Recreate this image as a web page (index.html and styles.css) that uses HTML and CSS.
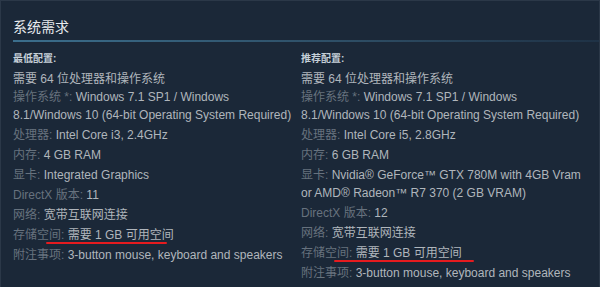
FILE: index.html
```html
<!DOCTYPE html>
<html lang="zh-CN">
<head>
<meta charset="utf-8">
<title>系统需求</title>
<link rel="stylesheet" href="styles.css">
</head>
<body>
<div class="panel">
  <h2 class="title">系统需求</h2>
  <div class="sysreq">
    <div class="col">
      <div class="head">最低配置:</div>
      <div class="req">需要 64 位处理器和操作系统</div>
      <ul class="list">
        <li><span class="lab">操作系统 *:</span> Windows 7.1 SP1 / Windows 8.1/Windows 10 (64-bit Operating System Required)</li>
        <li><span class="lab">处理器:</span> Intel Core i3, 2.4GHz</li>
        <li><span class="lab">内存:</span> 4 GB RAM</li>
        <li><span class="lab">显卡:</span> Integrated Graphics</li>
        <li><span class="lab">DirectX 版本:</span> 11</li>
        <li><span class="lab">网络:</span> 宽带互联网连接</li>
        <li class="mark"><span class="lab">存储空间:</span> 需要 1 GB 可用空间<span class="redline redline-left"></span></li>
        <li><span class="lab">附注事项:</span> 3-button mouse, keyboard and speakers</li>
      </ul>
    </div>
    <div class="col">
      <div class="head">推荐配置:</div>
      <div class="req">需要 64 位处理器和操作系统</div>
      <ul class="list">
        <li><span class="lab">操作系统 *:</span> Windows 7.1 SP1 / Windows 8.1/Windows 10 (64-bit Operating System Required)</li>
        <li><span class="lab">处理器:</span> Intel Core i5, 2.8GHz</li>
        <li><span class="lab">内存:</span> 6 GB RAM</li>
        <li><span class="lab">显卡:</span> Nvidia® GeForce™ GTX 780M with 4GB Vram or AMD® Radeon™ R7 370 (2 GB VRAM)</li>
        <li><span class="lab">DirectX 版本:</span> 12</li>
        <li><span class="lab">网络:</span> 宽带互联网连接</li>
        <li class="mark"><span class="lab">存储空间:</span> 需要 1 GB 可用空间<span class="redline redline-right"></span></li>
        <li><span class="lab">附注事项:</span> 3-button mouse, keyboard and speakers</li>
      </ul>
    </div>
  </div>
</div>
</body>
</html>
```

FILE: styles.css
```css
html, body {
  margin: 0;
  padding: 0;
  background: #1b2838;
}
body {
  width: 600px;
  height: 287px;
  overflow: hidden;
  font-family: "Liberation Sans", Arial, "Noto Sans CJK SC", sans-serif;
  color: #b0b6bc;
}
.panel {
  box-sizing: border-box;
  width: 600px;
  height: 287px;
  border: 1px solid #2b3848;
  border-bottom: none;
  padding: 17px 0 0 12px;
}
.title {
  margin: 0;
  font-size: 14px;
  line-height: 18px;
  font-weight: normal;
  color: #e8ebee;
}
.title::after {
  content: "";
  display: block;
  height: 2px;
  margin-top: 4px;
  background: linear-gradient(to right, #3b6e8c 0%, #2d4c63 60%, #1f3246 100%);
}
.sysreq {
  display: flex;
  gap: 8px;
  margin-top: 10px;
}
.col {
  width: 280px;
}
.head {
  font-size: 10px;
  line-height: 14px;
  font-weight: bold;
  color: #c6d0d8;
  margin-bottom: 4px;
}
.req {
  font-size: 12px;
  line-height: 18px;
}
.list {
  list-style: none;
  margin: 0;
  padding: 0;
  font-size: 12px;
  line-height: 18px;
}
.list li {
  margin-bottom: 2px;
}
.lab {
  color: #67727e;
}
.mark {
  position: relative;
}
.redline {
  position: absolute;
  height: 2px;
  background: #e51b1f;
  border-radius: 1px;
  top: 16px;
}
.redline-left {
  left: 33px;
  width: 121px;
}
.redline-right {
  left: 33px;
  width: 140px;
}
```
